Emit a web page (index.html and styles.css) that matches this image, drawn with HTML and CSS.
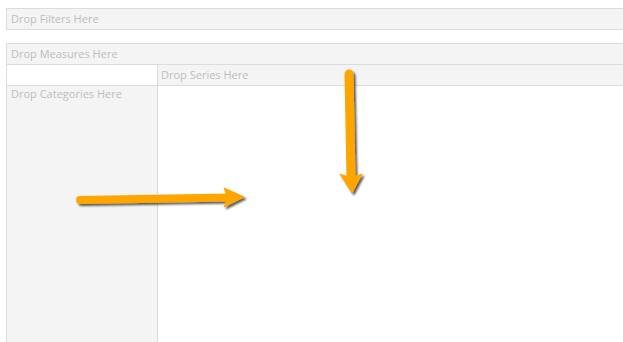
FILE: index.html
```html
<!DOCTYPE html>
<html lang="en">
<head>
  <meta charset="UTF-8" />
  <meta name="viewport" content="width=device-width, initial-scale=1" />
  <title>Pivot Designer</title>
  <link rel="stylesheet" href="styles.css">
</head>
<body>

  <div class="pivot">
    <div class="drop-zone filters">Drop Filters Here</div>

    <div class="drop-zone measures">Drop Measures Here</div>
    <div class="grid">
      <div class="corner"></div>
      <div class="series">Drop Series Here</div>
      <div class="categories">Drop Categories Here</div>
      <div class="body-area"></div>
    </div>
  </div>

  <svg class="hints" width="623" height="342" viewBox="0 0 623 342">
    <defs>
      <filter id="shadow" x="-20%" y="-20%" width="140%" height="140%">
        <feDropShadow dx="2" dy="2" stdDeviation="1.3" flood-color="#000" flood-opacity="0.65" />
      </filter>
    </defs>
    <g filter="url(#shadow)" fill="#ffa500" stroke="#ffa500">
      <line x1="80" y1="200" x2="230" y2="197.5" stroke-width="8" stroke-linecap="round" />
      <polygon points="224,188 244,197 224,207 228,197.5" stroke-width="1" stroke-linejoin="round" />
      <line x1="349" y1="74" x2="351" y2="178" stroke-width="9" stroke-linecap="round" />
      <polygon points="340,174 351,178 362,174 352,193" stroke-width="1" stroke-linejoin="round" />
    </g>
  </svg>

</body>
</html>
```

FILE: styles.css
```css
html, body { margin: 0; height: 100%; overflow: hidden; background: white; }
body { font-family: 'Open Sans', 'Segoe UI', sans-serif; font-size: 11px; color: #bfbcc3; }

.pivot { padding: 8px 0 0 6px; height: 100%; box-sizing: border-box; display: flex; flex-direction: column; }

.drop-zone { height: 20px; line-height: 20px; padding-left: 4px; background: #f4f4f4;
  border: 1px solid #dcdcdc; border-right: none; white-space: nowrap; }
.filters { margin-bottom: 13px; }
.measures { border-bottom: none; }

.grid { flex: 1; display: grid; grid-template-columns: 151px 1fr; grid-template-rows: 21px 1fr;
  border-left: 1px solid #dcdcdc; border-top: 1px solid #dcdcdc; }
.corner { background: white; border-bottom: 1px solid #dcdcdc; border-right: 1px solid #dcdcdc; }
.series { background: #f4f4f4; border-bottom: 1px solid #dcdcdc; line-height: 20px; padding-left: 3px; white-space: nowrap; }
.categories { background: #f4f4f4; border-right: 1px solid #dcdcdc; padding-left: 4px; line-height: 16px; }
.body-area { background: white; }

.hints { position: absolute; left: 0; top: 0; pointer-events: none; }
```
